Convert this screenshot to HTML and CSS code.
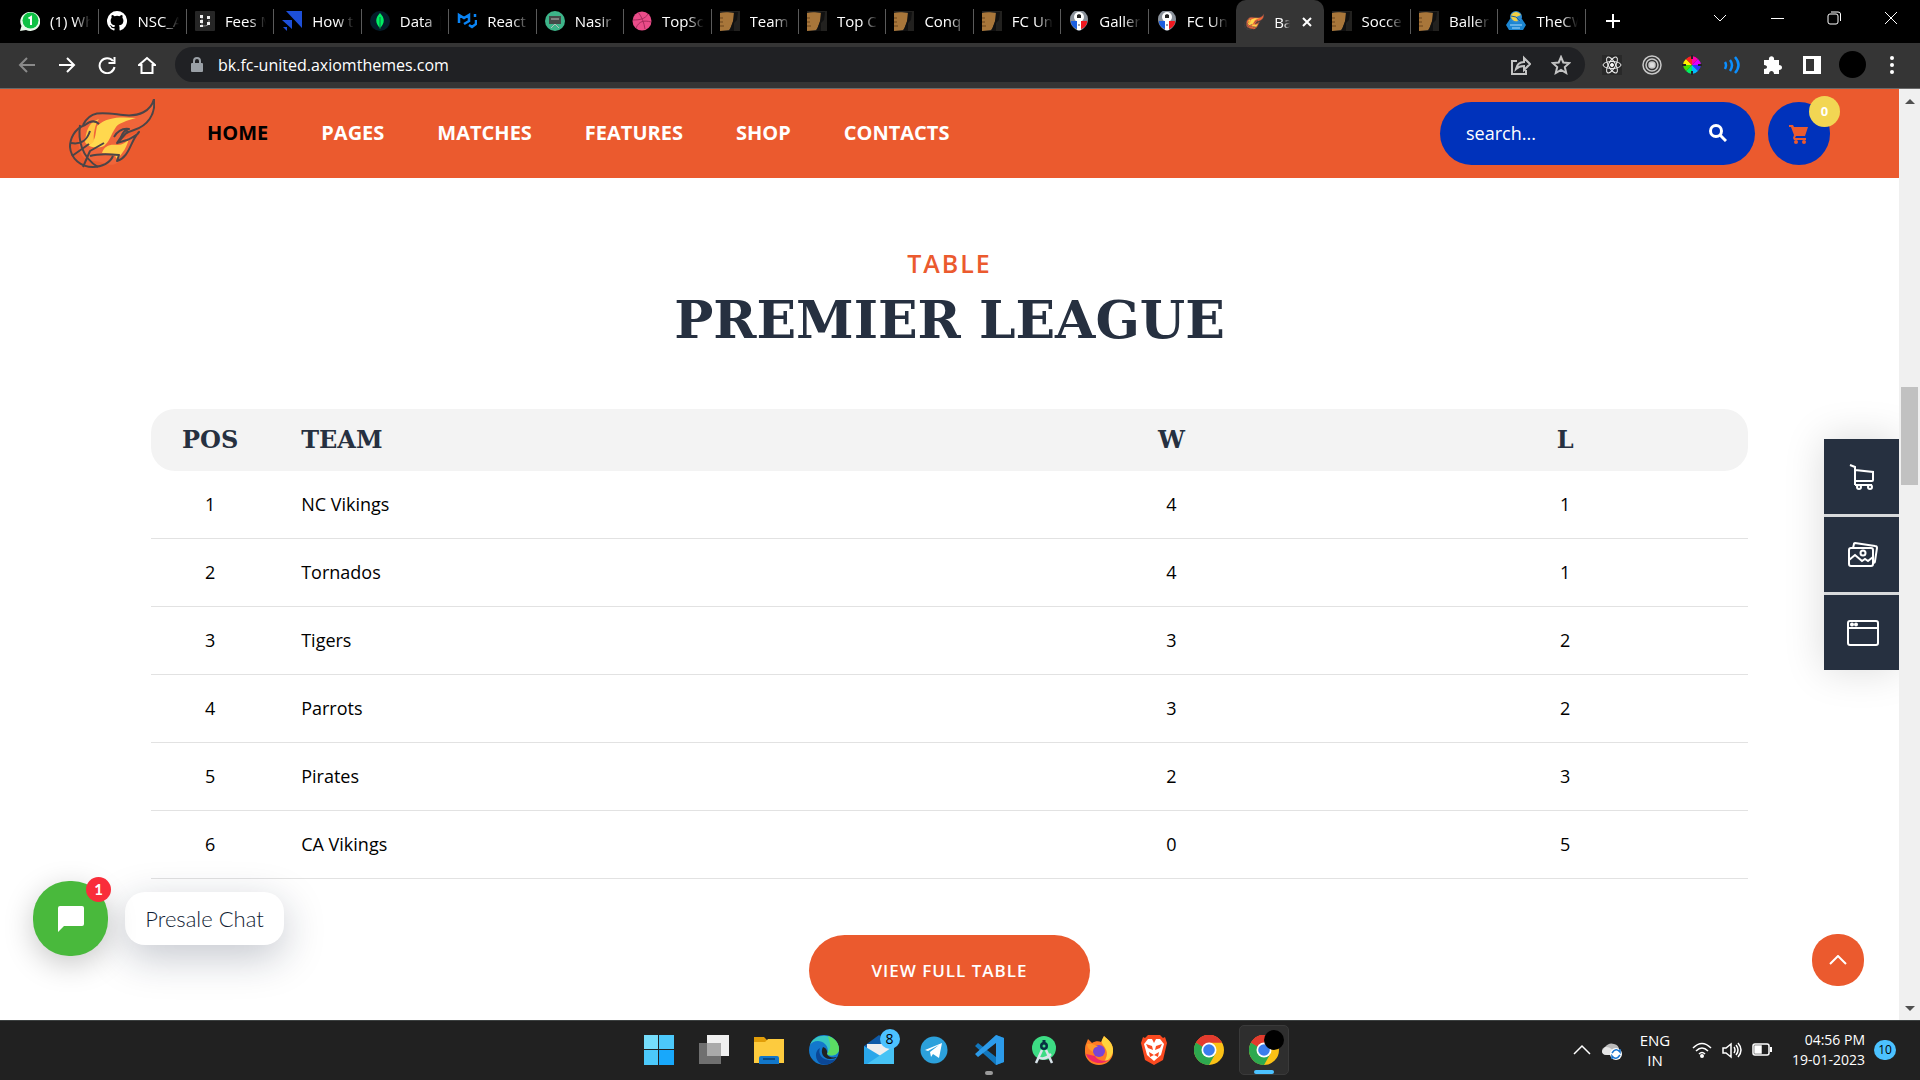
FILE: index.html
```html
<!DOCTYPE html>
<html lang="en">
<head>
<meta charset="utf-8">
<title>Basketball – FC United</title>
<link rel="stylesheet" href="styles.css">
</head>
<body>
<svg class="defs" aria-hidden="true">
  <symbol id="boot" viewBox="0 0 20 20"><rect width="20" height="20" fill="#22211f"/><path d="M0 2c4-1 8-1 14 0 1 6-1 9-2 11s-1 4-3 6l-9 1z" fill="#a8763a"/><path d="M14 1h4l-1 8-3 3v8H9c2-3 3-7 4-10z" fill="#111"/><path d="M0 7h3M0 11h3M0 15h4" stroke="#6b451c"/></symbol>
  <symbol id="crest" viewBox="0 0 20 20"><path d="M1 8a9 9 0 0 1 18 0c0 6-4 10-9 12C5 18 1 14 1 8z" fill="#8b929b"/><circle cx="10" cy="6" r="5" fill="#fff"/><path d="M8 4l2-1 2 1v3H8z" fill="#222"/><path d="M2 10h6v8c-4-2-6-4-6-8z" fill="#1c5fe0"/><path d="M12 10h6c0 4-2 6-6 8z" fill="#f01820"/><path d="M8 10h4v9H8z" fill="#fff"/><path d="M9 14h2" stroke="#444"/></symbol>
  <symbol id="flame" viewBox="0 0 86 70">
    <path d="M14 26C22 10 36 14 54 16c16 2 28-4 31-16 2 16-7 27-20 31-7 2-12 5-14 10l19-8c-9 9-9 25-22 31-8 5-12-2-25-2C8 62 6 38 14 26z" fill="#f0653a"/>
    <path d="M28 27c10-9 22-9 39-8-10 3-17 5-20 9-6 9-6 14-12 19-7 3-14 1-16-1 8-3 7-10 9-19z" fill="#ffd84e"/>
    <path d="M16 43c1-10 3-20 14-23-4 5-6 16-5 22-3 4-7 5-9 1z" fill="#ffc743"/>
    <path d="M33 54c2-7 8-9 15-8 6 0 10-3 12-7-2 9-6 15-12 21l-3-5z" fill="#ffd04a"/>
    <g fill="none" stroke="#4b4548" stroke-width="2" stroke-linejoin="round"><path d="M14 26C22 10 36 14 54 16c16 2 28-4 31-16 2 16-7 27-20 31-7 2-12 5-14 10l8-9"/><path d="M45 38c3-5 8-9 15-8-4 1-7 5-8 8l-4 6 10-3c6-3 10-4 12-8-9 9-9 25-22 29l2-6c-9-1-19-2-29 1"/><path d="M30 25c-4-4-9-3-14 1C5 30 1 40 1 48c1 12 11 20 23 20 9 0 17-4 20-11"/><path d="M11 26c-2 14 1 32 18 42M2 44c11 2 16-3 19-12M3 57l17-12M14 68l7-16 14-8"/></g>
  </symbol>
  <symbol id="chrome" viewBox="0 0 30 30"><circle cx="15" cy="15" r="15" fill="#fbc116"/><path d="M15 15L2 7.500A15 15 0 0 1 28 7.500H15z" fill="#e33b2e"/><path d="M2 7.500A15 15 0 0 0 15 30l6.500-11.500L15 15z" fill="#2da94f"/><path d="M2 7.500A15 15 0 0 1 28 7.500H15L9 12z" fill="#e33b2e"/><circle cx="15" cy="15" r="7.500" fill="#fff"/><circle cx="15" cy="15" r="5.800" fill="#3b7ded"/></symbol>
  <symbol id="cart" viewBox="0 0 20 20"><path d="M0 1h4l1 2h14l-3 9H7l-1 2h11v2H5l-1-2 1-3L2 3H0z"/><circle cx="7" cy="18" r="2"/><circle cx="15" cy="18" r="2"/></symbol>
</svg>

<header class="tabstrip">
  <nav class="tabs" aria-label="Open tabs">
    <a href="#" class="tab"><svg viewBox="0 0 20 20"><path d="M0 20l1.500-5A10 9.500 0 1 1 6 19z" fill="#e8f9ea"/><circle cx="10.500" cy="9.500" r="8" fill="#0ec244"/><path d="M8.500 7.500L11 6v8" fill="none" stroke="#fff" stroke-width="2"/></svg><span>(1) Wh</span></a>
    <a href="#" class="tab"><svg viewBox="0 0 16 16"><path fill="#fff" d="M8 0a8 8 0 0 0-2.530 15.590c.4.070.550-.170.550-.380v-1.490c-2.230.480-2.700-.950-2.700-.950-.360-.920-.890-1.170-.890-1.170-.730-.500.060-.490.060-.490.800.060 1.230.830 1.230.830.710 1.220 1.870.870 2.330.660.070-.520.280-.870.510-1.070-1.780-.200-3.640-.890-3.640-3.950 0-.870.310-1.590.820-2.150-.080-.200-.360-1.020.080-2.120 0 0 .670-.220 2.200.820a7.600 7.600 0 0 1 4 0c1.530-1.040 2.200-.820 2.200-.820.440 1.100.160 1.920.080 2.120.510.560.820 1.270.820 2.150 0 3.070-1.870 3.750-3.650 3.950.290.250.540.730.540 1.480v2.200c0 .210.150.460.550.380A8 8 0 0 0 8 0z"/></svg><span>NSC_A</span></a>
    <a href="#" class="tab"><svg viewBox="0 0 20 20"><rect width="20" height="20" rx="1" fill="#262626"/><path d="M7 5v10M14 9v3q0 3-6 3" fill="none" stroke="#888"/><path d="M5 4h3v3H5zM5 9h3v3H5zM5 14h3v2H5zM12 5h3v3h-3zM12 11h3v3h-3z" fill="#eee"/></svg><span>Fees M</span></a>
    <a href="#" class="tab"><svg viewBox="0 0 20 20"><path d="M4 0h16v17zM0 9h10v9zM1 16h4v4z" fill="#1d4fd8"/></svg><span>How t</span></a>
    <a href="#" class="tab"><svg viewBox="0 0 20 20"><circle cx="10" cy="10" r="10" fill="#041e2b"/><path d="M10 2c5 5 5 10 0 15-5-5-5-10 0-15z" fill="#00ed64"/><path d="M10 6v12" stroke="#067a3c"/></svg><span>Data |</span></a>
    <a href="#" class="tab"><svg viewBox="0 0 20 20"><path d="M2 12V4l5 3 5-3v6l-5 3M12 14l3 2 4-3V9M18 3v3" fill="none" stroke="#0a84f5" stroke-width="2.500"/></svg><span>React</span></a>
    <a href="#" class="tab"><svg viewBox="0 0 20 20"><circle cx="10" cy="10" r="10" fill="#3db489"/><path d="M4 5h12v8H4z" fill="#444a48"/><path d="M6 8h8M10 13l-4 4M10 13l4 4" stroke="#bbb" fill="none"/></svg><span>Nasir</span></a>
    <a href="#" class="tab"><svg viewBox="0 0 20 20"><circle cx="10" cy="10" r="9.500" fill="#ea4c89"/><path d="M6 1c4 5 6 11 7 17M1 9c7 0 12-1 15-6M4 17c3-7 8-8 15-6" fill="none" stroke="#a72a5c"/></svg><span>TopSc</span></a>
    <a href="#" class="tab"><svg><use href="#boot"/></svg><span>Team</span></a>
    <a href="#" class="tab"><svg><use href="#boot"/></svg><span>Top C</span></a>
    <a href="#" class="tab"><svg><use href="#boot"/></svg><span>Conq</span></a>
    <a href="#" class="tab"><svg><use href="#boot"/></svg><span>FC Un</span></a>
    <a href="#" class="tab"><svg><use href="#crest"/></svg><span>Galler</span></a>
    <a href="#" class="tab last"><svg><use href="#crest"/></svg><span>FC Un</span></a>
    <a href="#" class="tab active"><svg><use href="#flame"/></svg><span>Ba</span><svg class="close" viewBox="0 0 10 10"><path d="M1 1l8 8M9 1L1 9"/></svg></a>
    <a href="#" class="tab"><svg><use href="#boot"/></svg><span>Socce</span></a>
    <a href="#" class="tab"><svg><use href="#boot"/></svg><span>Baller</span></a>
    <a href="#" class="tab"><svg viewBox="0 0 20 20"><path d="M4 8h12l4 6-3 5H3l-3-5z" fill="#1c86d1"/><circle cx="10" cy="6" r="6" fill="#2c8ad4"/><path d="M5 4c3-4 7-4 10 0l-5 2 2 4c-4 1-6-1-7-4z" fill="#f0cf45"/><path d="M10 6l4 4M5 5l5 1" stroke="#1b5f9c"/><path d="M4 14h12M6 17h8" stroke="#a8daff"/></svg><span>TheCW</span></a>
  </nav>
  <button class="newtab" aria-label="New tab"><svg viewBox="0 0 16 16"><path d="M8 1v14M1 8h14"/></svg></button>
  <div class="wincontrols">
    <button aria-label="Search tabs"><svg viewBox="0 0 14 14"><path d="M1 4l6 6 6-6"/></svg></button>
    <button aria-label="Minimize"><svg viewBox="0 0 14 14"><path d="M1 7.500h13"/></svg></button>
    <button aria-label="Restore"><svg viewBox="0 0 14 14"><rect x="1" y="3" width="10" height="10" rx="2"/><path d="M4 1h7q2.500 0 2.500 2v7"/></svg></button>
    <button aria-label="Close"><svg viewBox="0 0 14 14"><path d="M1 1l12 12M13 1L1 13"/></svg></button>
  </div>
</header>

<div class="toolbar">
  <div class="navbuttons">
    <button aria-label="Back" class="dim"><svg viewBox="0 0 18 18"><path d="M17 9H2M9 2L2 9l7 7"/></svg></button>
    <button aria-label="Forward"><svg viewBox="0 0 18 18"><path d="M1 9h15M9 2l7 7-7 7"/></svg></button>
    <button aria-label="Reload"><svg viewBox="0 0 18 18"><path d="M15 5a7.500 7.500 0 1 0 1.500 6M16.500 1v6h-6"/></svg></button>
    <button aria-label="Home"><svg viewBox="0 0 18 18"><path d="M1 9l8-7 8 7h-2.500v8h-11V9z"/></svg></button>
  </div>
  <div class="omnibox">
    <svg class="lock" viewBox="0 0 12 16"><rect y="6" width="12" height="9" rx="1" fill="#9aa0a6"/><path d="M3 7V4a3 3 0 0 1 6 0v3" fill="none" stroke="#9aa0a6" stroke-width="2"/></svg>
    <input type="text" aria-label="Address" value="bk.fc-united.axiomthemes.com">
    <button aria-label="Share"><svg viewBox="0 0 20 20"><path d="M6 6H1v13h14v-4M5 14c1-5 4-7 8-7V3l6 6-6 6v-4c-4 0-6 1-8 3z"/></svg></button>
    <button aria-label="Bookmark"><svg viewBox="0 0 20 20"><path d="M10 2l2.300 5.500 6 .5-4.500 4 1.400 6L10 15l-5.200 3 1.400-6-4.500-4 6-.5z"/></svg></button>
  </div>
  <div class="extensions">
    <button aria-label="React tools"><svg viewBox="0 0 20 20" fill="none" stroke="#eee"><rect width="20" height="20" fill="#292929" stroke="none"/><ellipse cx="10" cy="10" rx="9" ry="3.500"/><ellipse cx="10" cy="10" rx="9" ry="3.500" transform="rotate(60 10 10)"/><ellipse cx="10" cy="10" rx="9" ry="3.500" transform="rotate(120 10 10)"/><circle cx="10" cy="10" r="1.500" fill="#fff"/></svg></button>
    <button aria-label="Target"><svg viewBox="0 0 20 20" fill="none" stroke="#c8c8c8" stroke-width="1.500"><circle cx="10" cy="10" r="9"/><circle cx="10" cy="10" r="6"/><circle cx="10" cy="10" r="3" fill="#ddd"/></svg></button>
    <button aria-label="Color picker"><svg viewBox="0 0 20 20"><path d="M10 10V1a9 9 0 0 1 6 3z" fill="#f0a"/><path d="M10 10l6-6a9 9 0 0 1 3 6z" fill="#d0f"/><path d="M10 10h9a9 9 0 0 1-3 6z" fill="#33f"/><path d="M10 10l6 6a9 9 0 0 1-6 3z" fill="#0bf"/><path d="M10 10v9a9 9 0 0 1-6-3z" fill="#0e6"/><path d="M10 10l-6 6a9 9 0 0 1-3-6z" fill="#4d0"/><path d="M10 10H1a9 9 0 0 1 3-6z" fill="#fe0"/><path d="M10 10L4 4a9 9 0 0 1 6-3z" fill="#f22"/><path d="M10 0v4M10 16v4M0 10h4M16 10h4" stroke="#222" stroke-width="2"/></svg></button>
    <button aria-label="Reader"><svg viewBox="0 0 20 20" fill="none" stroke="#0b8fff" stroke-width="2.500"><path d="M3 7q2 3 0 7M8 5q4 5 0 11M13 2q7 8 0 16"/></svg></button>
    <button aria-label="Extensions"><svg viewBox="0 0 20 20"><path fill="#fff" d="M2 5h5c-1-5 6-5 5 0h5v5c4 0 4 5 0 5v4h-5c0-4-5-4-5 0H2v-5c4 0 4-4 0-4z"/></svg></button>
    <button aria-label="Side panel"><svg viewBox="0 0 20 20"><path fill="#fff" d="M1 1h18v18H1zM4 4v12h8V4z" fill-rule="evenodd"/></svg></button>
    <button aria-label="Profile" class="avatar"></button>
    <button aria-label="Menu"><svg viewBox="0 0 20 20" fill="#fff"><circle cx="10" cy="3" r="2"/><circle cx="10" cy="10" r="2"/><circle cx="10" cy="17" r="2"/></svg></button>
  </div>
</div>

<div class="viewport">
  <main class="page">
    <header class="sitehead">
      <a href="#" aria-label="Home page"><svg class="logo"><use href="#flame"/></svg></a>
      <nav class="menu" aria-label="Main">
        <a href="#" class="current">HOME</a><a href="#">PAGES</a><a href="#">MATCHES</a><a href="#">FEATURES</a><a href="#">SHOP</a><a href="#">CONTACTS</a>
      </nav>
      <form class="search">
        <input type="text" aria-label="Search" placeholder="search...">
        <button type="button" aria-label="Search"><svg viewBox="0 0 18 18"><circle cx="7" cy="7" r="5.500"/><path d="M11 11l6 6"/></svg></button>
      </form>
      <a href="#" class="basket" aria-label="Cart"><svg><use href="#cart"/></svg><span class="count">0</span></a>
    </header>

    <section class="league">
      <p class="kicker">TABLE</p>
      <h1>PREMIER LEAGUE</h1>
      <table>
        <thead><tr><th class="pos">POS</th><th class="team">TEAM</th><th class="won">W</th><th class="lost">L</th></tr></thead>
        <tbody>
          <tr><td>1</td><td class="team">NC Vikings</td><td>4</td><td>1</td></tr>
          <tr><td>2</td><td class="team">Tornados</td><td>4</td><td>1</td></tr>
          <tr><td>3</td><td class="team">Tigers</td><td>3</td><td>2</td></tr>
          <tr><td>4</td><td class="team">Parrots</td><td>3</td><td>2</td></tr>
          <tr><td>5</td><td class="team">Pirates</td><td>2</td><td>3</td></tr>
          <tr><td>6</td><td class="team">CA Vikings</td><td>0</td><td>5</td></tr>
        </tbody>
      </table>
      <a href="#" class="full">VIEW FULL TABLE</a>
    </section>

    <aside class="sidepanel">
      <a href="#" aria-label="Buy"><svg viewBox="0 0 32 32"><path d="M3 4l5 2v18M8 9l18 2v8q0 1-1 1H8M8 24h17"/><circle cx="12" cy="26" r="2"/><circle cx="23" cy="26" r="2"/></svg></a>
      <a href="#" aria-label="Demos"><svg viewBox="0 0 32 32"><rect x="2" y="9" width="24" height="18" rx="2"/><path d="M6 9l1-4q0-1 1-1l20 3q2 0 2 2l-2 13q0 2-2 2M2 21l6-5 7 6 3-2 3 2 5-4"/><circle cx="16" cy="14" r="2.500"/></svg></a>
      <a href="#" aria-label="Window"><svg viewBox="0 0 32 32"><rect x="1" y="4" width="30" height="24" rx="2"/><path d="M1 11h30"/><circle cx="5" cy="7.500" r="1"/><circle cx="9" cy="7.500" r="1"/></svg></a>
    </aside>

    <div class="chat">
      <button class="bubble" aria-label="Open chat"><svg viewBox="0 0 26 26"><path d="M2 0h22a2 2 0 0 1 2 2v16a2 2 0 0 1-2 2H6l-6 6V2a2 2 0 0 1 2-2z" fill="#fff"/></svg><span>1</span></button>
      <span class="chatlabel">Presale Chat</span>
    </div>
    <button class="totop" aria-label="Back to top"><svg viewBox="0 0 18 10"><path d="M1 9l8-8 8 8"/></svg></button>
  </main>
  <div class="scrollbar">
    <svg viewBox="0 0 10 6"><path d="M0 6l5-5 5 5z"/></svg>
    <div class="thumb"></div>
    <svg class="down" viewBox="0 0 10 6"><path d="M0 0h10L5 5z"/></svg>
  </div>
</div>

<footer class="taskbar">
  <div class="apps">
    <button aria-label="Start"><svg viewBox="0 0 30 30"><path d="M0 0h14v14H0z" fill="#75ddfb"/><path d="M15 0h15v14H15zM0 15h14v15H0z" fill="#4cc9fb"/><path d="M15 15h15v15H15z" fill="#18a8fb"/></svg></button>
    <button aria-label="Task view"><svg viewBox="0 0 30 30"><path d="M8 0h22v21H8z" fill="#f0f0f0"/><path d="M0 8h22v21H0z" fill="#6f6f6f"/><path d="M8 8h14v13H8z" fill="#aaa"/></svg></button>
    <button aria-label="Files"><svg viewBox="0 0 30 30"><path d="M0 2h10l3 3h14v10H0z" fill="#e19d09"/><path d="M0 7h11l3-3h16v24H0z" fill="#fdcb3e"/><path d="M5 29v-6q0-2 2-2h16q2 0 2 2v6z" fill="#1277ca"/><path d="M9 24h12" stroke="#0a4a83" stroke-width="2"/></svg></button>
    <button aria-label="Edge"><svg viewBox="0 0 30 30"><circle cx="15" cy="15" r="15" fill="#1378cc"/><path d="M1 10C5-3 28-3 30 14c0 7-9 8-12 5 3-7-3-13-9-13-4 0-7 2-8 4z" fill="#37c6c1"/><path d="M19 1c7 2 11 7 11 13 0 6-8 8-12 5 6-7 2-12 1-18z" fill="#5bdc63"/><path d="M11 13c-3 8 5 15 16 11-4 5-10 7-15 5C6 26 5 16 11 13z" fill="#0b4796"/><path d="M14 12c-3 5 0 12 7 12 3 0 6-1 7-2-5 1-9 0-10-3 1-3-1-6-4-7z" fill="#212121"/></svg></button>
    <button aria-label="Mail"><svg viewBox="0 0 30 30"><path d="M0 11L15 0l15 11v18H0z" fill="#0f5ba8"/><path d="M3 9h24v9l-12 7L3 18z" fill="#eee"/><path d="M0 11l30 18H0z" fill="#2aa7ea"/><path d="M30 11v18H3z" fill="#47c3f5"/></svg><span class="mailcount">8</span></button>
    <button aria-label="Telegram"><svg viewBox="0 0 30 30"><circle cx="15" cy="15" r="13.500" fill="#2ca1dc"/><path d="M6 15l17-7-3 15-6-4-2 3-1-5 9-7-11 6z" fill="#fff"/></svg></button>
    <button aria-label="Code" class="open"><svg viewBox="0 0 30 30"><path d="M22 0l8 3v24l-8 3L1 11l3-3 18 14z" fill="#1277bd"/><path d="M22 0l8 3v24l-8 3V8L4 22l-3-3z" fill="#2c9bea"/></svg></button>
    <button aria-label="Android Studio"><svg viewBox="0 0 30 30"><circle cx="15" cy="13" r="12" fill="#3ddc84"/><circle cx="15" cy="11" r="4" fill="#073042"/><circle cx="15" cy="11" r="1.500" fill="#3ddc84"/><path d="M15 5v3" stroke="#073042" stroke-width="3"/><path d="M13 15L7 28M17 15l6 13M9 22q6 4 13-3" stroke="#d9e4ea" stroke-width="2.500" fill="none"/></svg></button>
    <button aria-label="Firefox"><svg viewBox="0 0 30 30"><path d="M2 9l2-5 4 4c3-2 7-2 9-1l3-6c3 3 10 7 9 16a14 13 0 0 1-28 0c0-4 0-6 1-8z" fill="#ff7b24"/><path d="M20 1c3 3 10 7 9 16-1 5-5 9-9 10 5-8 3-12-1-17-3-4 0-6 1-9z" fill="#ffd33d"/><path d="M2 19a14 12 0 0 0 23 6c-6 2-12 0-14-4z" fill="#ef2867"/><circle cx="15" cy="16" r="6" fill="#7845d5"/><path d="M3 9c5-1 8 1 11 3-4 0-5 2-5 5-4-2-6-5-6-8z" fill="#ff9a2a"/></svg></button>
    <button aria-label="Brave"><svg viewBox="0 0 30 30"><path d="M9 0h12l3 3 2-1 2 6-4 17-9 5-9-5L2 8l2-6 2 1z" fill="#fb4a20"/><path d="M9 4h12l4 5-3 11-7 6-7-6L5 9z" fill="#fff"/><path d="M7 9l6 2 1 4-5-2zM23 9l-6 2-1 4 5-2zM10 17l5 3 5-3-1 5-4-2-4 2zM13 4l2 4 2-4" fill="#fb4a20"/></svg></button>
    <button aria-label="Chrome"><svg><use href="#chrome"/></svg></button>
    <button aria-label="Chrome profile" class="focused"><svg><use href="#chrome"/></svg><span class="person"></span></button>
  </div>
  <div class="tray">
    <button aria-label="Hidden icons"><svg viewBox="0 0 20 20"><path d="M2 14l8-8 8 8"/></svg></button>
    <button aria-label="OneDrive"><svg viewBox="0 0 20 20"><path d="M5 15q-5 0-5-4 0-3 3-4 4-5 9-3 5 1 5 6l-3 5z" fill="#b9b9b9" stroke="none"/><path d="M3 7q7-1 10 8H5q-5 0-5-4z" fill="#e6e6e6" stroke="none"/><circle cx="14" cy="14" r="6" fill="#fff" stroke="none"/><path d="M10 13q4-6 8-1V9M18 15q-4 6-8 1v3" stroke="#1774d0"/></svg></button>
    <p class="lang">ENG<br>IN</p>
    <button aria-label="Network"><svg viewBox="0 0 20 20"><path d="M1 8q9-9 18 0M4 11q6-6 12 0M7 14q3-3 6 0"/><circle cx="10" cy="16" r="2" fill="#fff" stroke="none"/></svg></button>
    <button aria-label="Volume"><svg viewBox="0 0 20 20"><path d="M1 8h3l5-4v13l-5-4H1zM12 7q2 3 0 6M14 5q4 5 0 10M16 3q6 7 0 14"/></svg></button>
    <button aria-label="Battery"><svg viewBox="0 0 20 20"><rect x="1" y="4" width="16" height="11" rx="2"/><path d="M3 6h6v7H3z" fill="#fff"/><path d="M19 7v5" stroke-width="2"/></svg></button>
    <p class="clock">04:56 PM<br>19-01-2023</p>
    <span class="notes">10</span>
  </div>
</footer>
</body>
</html>
```
FILE: styles.css
```css
* { box-sizing: border-box; }
body {
  margin: 0;
  height: 100vh;
  display: flex;
  flex-direction: column;
  overflow: hidden;
  background: #fff;
  color: #000;
  font-family: "Open Sans", "Noto Sans", sans-serif;
}
a { color: inherit; text-decoration: none; }
p { margin: 0; }
button { border: 0; padding: 0; background: none; font: inherit; color: inherit; display: flex; align-items: center; justify-content: center; }
input { border: 0; padding: 0; background: none; font: inherit; color: inherit; outline: 0; min-width: 0; }
svg { display: block; flex: none; }
.defs { position: absolute; width: 0; height: 0; }

/* Browser tabs */
.tabstrip { display: flex; height: 43px; padding-left: 12px; background: #000; color: #fff; }
.tabs { flex: 1; display: flex; min-width: 0; }
.tab { flex: 1 1 0; min-width: 0; display: flex; align-items: center; gap: 10px; padding: 0 8px; font-size: 15px; position: relative; height: 41px; }
.tab svg { width: 20px; height: 20px; }
.tab span { flex: 1; min-width: 0; overflow: hidden; white-space: nowrap; mask-image: linear-gradient(to right, #000 60%, transparent); }
.tab::after { content: ""; position: absolute; right: 0; top: 9px; width: 1px; height: 25px; background: #5a5a5a; }
.tab.last::after, .tab.active::after { display: none; }
.tab.active { background: #353535; border-radius: 10px 10px 0 0; height: 43px; }
.tab.active span { flex: 0 0 16px; }
.tab .close { width: 10px; height: 10px; stroke: #fff; stroke-width: 2; margin-left: 2px; }
.newtab { width: 54px; padding-bottom: 2px; }
.newtab svg { width: 16px; height: 16px; stroke: #fff; stroke-width: 2; }
.wincontrols { display: flex; padding: 0 1px 8px 51px; }
.wincontrols button { width: 57px; }
.wincontrols svg { width: 14px; height: 14px; fill: none; stroke: #fff; }

/* Address bar */
.toolbar { display: flex; align-items: center; height: 46px; padding: 0 8px 2px 7px; background: #353535; border-bottom: 1px solid #6a6a6a; color: #fff; }
.navbuttons { display: flex; width: 168px; }
.navbuttons button { width: 40px; }
.navbuttons svg { width: 18px; height: 18px; fill: none; stroke: #fff; stroke-width: 2; }
.navbuttons .dim svg { stroke: #8a8a8a; }
.omnibox { flex: 1; display: flex; align-items: center; height: 35px; padding: 0 12px 0 16px; border-radius: 18px; background: #202124; }
.lock { width: 12px; height: 16px; margin-right: 15px; }
.omnibox input { flex: 1; font-size: 16px; }
.omnibox button { width: 24px; margin-left: 16px; }
.omnibox button svg { width: 20px; height: 20px; fill: none; stroke: #c4c4c4; stroke-width: 2; }
.extensions { display: flex; align-items: center; padding-left: 7px; }
.extensions button { width: 40px; }
.extensions svg { width: 20px; height: 20px; }
.extensions .avatar { width: 27px; height: 27px; margin: 0 6px 0 7px; border-radius: 50%; background: #000; }

/* Site */
.viewport { flex: 1; min-height: 0; display: flex; }
.page { flex: 1; position: relative; overflow: hidden; }
.sitehead { display: flex; align-items: center; height: 89px; padding: 0 69px; background: #eb5a2e; color: #fff; }
.logo { width: 86px; height: 70px; }
.menu { flex: 1; display: flex; gap: 53px; margin-left: 52px; padding-bottom: 2px; font-size: 20px; font-weight: 700; }
.menu .current { color: #000; }
.search { display: flex; align-items: center; width: 315px; height: 63px; padding: 0 28px 2px 26px; border-radius: 32px; background: #0032bb; font-size: 18px; }
.search input { flex: 1; }
.search input::placeholder { color: #fff; opacity: 1; }
.search svg { width: 18px; height: 18px; fill: none; stroke: #fff; stroke-width: 3; }
.basket { display: flex; align-items: center; justify-content: center; position: relative; width: 62px; height: 63px; margin-left: 13px; border-radius: 32px; background: #0032bb; }
.basket svg { width: 20px; height: 20px; fill: #eb5a2e; }
.count { position: absolute; right: -10px; top: -6px; width: 31px; height: 31px; border-radius: 50%; background: #f2d653; font-size: 13px; font-weight: 700; line-height: 31px; text-align: center; }

.league { display: flex; flex-direction: column; align-items: center; padding: 67px 151px 0; }
.kicker { color: #eb5a2e; font-size: 25px; font-weight: 600; line-height: 36px; letter-spacing: 2px; }
h1 { margin: 0; padding-top: 4px; color: #263040; font: 700 52px/70px "DejaVu Serif", serif; }
table { width: 100%; margin-top: 54px; border-collapse: separate; border-spacing: 0; table-layout: fixed; text-align: center; }
th { height: 62px; padding: 0; background: #f3f3f3; color: #263040; font: 700 24px/30px "DejaVu Serif", serif; }
th:first-child { width: 7.4%; border-radius: 24px 0 0 24px; }
th.team { width: 43.3%; }
th.won { width: 26.4%; }
th:last-child { border-radius: 0 24px 24px 0; }
td { height: 68px; padding: 0 0 2px; border-bottom: 1px solid #e2e2e2; font-size: 18px; }
.team { padding-left: 32px; text-align: left; }
.full { margin-top: 56px; padding: 0 62px; border-radius: 36px; background: #eb5a2e; color: #fff; font-size: 17px; font-weight: 600; line-height: 71px; letter-spacing: 1px; }

/* Floating pieces */
.sidepanel { position: absolute; right: 0; top: 350px; display: flex; flex-direction: column; gap: 3px; box-shadow: 0 0 40px rgba(0, 0, 0, .15); background: #d8dadc; }
.sidepanel a { display: flex; align-items: center; justify-content: center; width: 75px; height: 75px; padding-left: 3px; background: #263040; }
.sidepanel svg { width: 32px; height: 32px; fill: none; stroke: #fff; stroke-width: 2; }
.chat { position: absolute; left: 33px; bottom: 64px; display: flex; align-items: center; gap: 17px; }
.bubble { position: relative; width: 75px; height: 75px; border-radius: 36px; background: #49b93c; box-shadow: 0 8px 30px rgba(0, 0, 0, .22); }
.bubble svg { width: 26px; height: 26px; }
.bubble span { position: absolute; right: -3px; top: -4px; width: 25px; height: 25px; border-radius: 50%; background: #f92d3a; color: #fff; font: 700 15px/25px Lato, sans-serif; }
.chatlabel { width: 159px; border-radius: 20px; background: #fff; box-shadow: 0 12px 40px rgba(20, 30, 60, .25); color: #0f1b34; font: 300 22px/53px Lato, sans-serif; text-align: center; }
.totop { position: absolute; right: 35px; bottom: 34px; width: 52px; height: 52px; border-radius: 25px; background: #eb5a2e; }
.totop svg { width: 18px; height: 10px; fill: none; stroke: #fff; stroke-width: 2; }
.scrollbar { width: 21px; display: flex; flex-direction: column; align-items: center; padding: 9px 0 8px; background: #f0f0f0; }
.scrollbar svg { width: 10px; height: 6px; fill: #505050; }
.thumb { width: 17px; height: 98px; margin-top: 283px; background: #c1c1c1; }
.scrollbar .down { margin-top: auto; }

/* Taskbar */
.taskbar { display: grid; grid-template-columns: 1fr auto 1fr; height: 60px; background: #212121; border-top: 1px solid #3c4040; color: #fff; }
.apps { grid-column: 2; display: flex; align-items: center; gap: 5px; padding: 0 1px 2px 3px; }
.apps button { position: relative; width: 50px; height: 50px; border-radius: 5px; }
.apps svg { width: 30px; height: 30px; }
.apps .focused { background: #2e2e2e; border: 1px solid #3a3a3a; }
.apps .focused::after, .apps .open::after { content: ""; position: absolute; bottom: 0; width: 20px; height: 4px; border-radius: 2px; background: #4cc2ff; }
.apps .open::after { width: 8px; background: #9a9a9a; }
.mailcount, .person { position: absolute; right: 4px; top: 4px; width: 20px; height: 20px; border-radius: 50%; background: #4cc2ff; color: #000; font-size: 14px; line-height: 20px; }
.person { background: #000; }
.tray { display: flex; align-items: center; justify-content: flex-end; padding: 0 24px 2px 0; font-size: 15px; line-height: 20px; }
.tray button { width: 30px; }
.tray svg { width: 20px; height: 20px; fill: none; stroke: #fff; stroke-width: 1.5; }
.lang { width: 56px; text-align: center; margin-right: 4px; }
.clock { width: 88px; font-size: 14px; text-align: right; white-space: nowrap; }
.notes { width: 22px; height: 20px; margin-left: 9px; border-radius: 10px; background: #4cc2ff; color: #000; font-size: 12px; text-align: center; }
```
